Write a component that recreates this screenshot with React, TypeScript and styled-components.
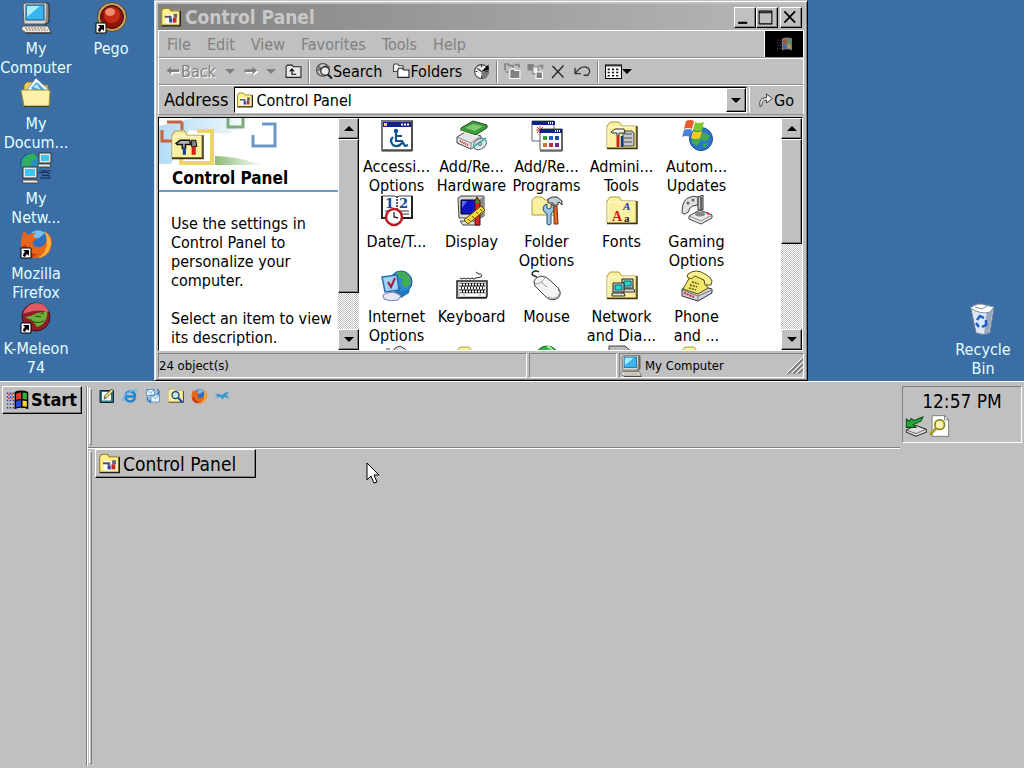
import React from 'react';
import styled, { createGlobalStyle, css } from 'styled-components';

const face = '#c0c0c0';
const shade = '#808080';
const dark = '#000000';
const light = '#ffffff';

const raised = css`
  border: 1px solid;
  border-color: ${light} ${dark} ${dark} ${light};
  box-shadow: inset -1px -1px 0 ${shade};
`;

const GlobalStyle = createGlobalStyle`
  *, *::before, *::after { box-sizing: border-box; }
  body { margin: 0; overflow: hidden; background: ${face}; }
  body, button, input {
    font-family: "DejaVu Sans Condensed", "DejaVu Sans", sans-serif;
    font-size: 16px;
    line-height: 19px;
  }
  button { margin: 0; padding: 0; border: 0; background: none; color: inherit; }
  p, h1, h2 { margin: 0; }
`;

const Screen = styled.div`
  display: flex;
  flex-direction: column;
  height: 100vh;
`;

const Desktop = styled.main`
  position: relative;
  flex: 1;
  min-height: 0;
  display: flex;
  justify-content: space-between;
  padding: 2px 4px 0 0;
  background: #3a6ea5;
  color: #e4ffff;
`;

const Shortcuts = styled.div`
  display: grid;
  grid-auto-flow: column;
  grid-template-rows: repeat(5, 75px);
  grid-auto-columns: 72px;
  column-gap: 3px;
`;

const BinArea = styled.div`
  padding-top: 301px;
  width: 74px;
`;

const Item = styled.button`
  display: flex;
  flex-direction: column;
  align-items: center;
  gap: 5px;
  width: 100%;
  height: 75px;
  white-space: nowrap;
`;

const ItemLabel = styled.span`
  display: block;
  text-align: center;
  white-space: pre;
`;

const Icon = styled.svg<{ $size?: number }>`
  display: block;
  flex: none;
  width: ${(p) => p.$size ?? 32}px;
  height: ${(p) => p.$size ?? 32}px;
  overflow: hidden;
`;

/* ---------- window frame ---------- */

const Window = styled.section`
  position: absolute;
  left: 154px;
  top: 0;
  bottom: 0;
  width: 654px;
  display: flex;
  flex-direction: column;
  padding: 2px 3px 1px;
  background: ${face};
  color: #000;
  border: 1px solid;
  border-color: ${face} ${dark} ${dark} #d8e4f4;
  box-shadow: inset 1px 1px 0 ${light}, inset -1px -1px 0 ${shade};
`;

const TitleBar = styled.header`
  display: flex;
  align-items: center;
  gap: 4px;
  height: 26px;
  margin-top: 1px;
  padding: 0 2px 0 3px;
  background: linear-gradient(90deg, #828282, #b8b8b8);
`;

const Title = styled.h1`
  flex: 1;
  font-size: 19px;
  line-height: 22px;
  font-weight: bold;
  color: #c8c8c8;
`;

const CaptionButtons = styled.div`
  display: flex;
`;

const CaptionButton = styled.button<{ $apart?: boolean }>`
  ${raised}
  width: 22px;
  height: 21px;
  margin-left: ${(p) => (p.$apart ? 2 : 0)}px;
  background: ${face};
`;

const Bar = styled.div<{ $height: number }>`
  display: flex;
  align-items: center;
  height: ${(p) => p.$height}px;
  border-top: 1px solid ${light};
  border-bottom: 1px solid #909090;
  border-left: 1px solid ${light};
  border-right: 1px solid ${light};
`;

const Menus = styled.nav`
  flex: 1;
  display: flex;
  gap: 16px;
  padding-left: 8px;
  color: ${shade};
`;

const Throbber = styled.div`
  display: flex;
  align-items: center;
  justify-content: center;
  width: 39px;
  height: 26px;
  background: #000;
  border-left: 1px solid ${light};
`;

const ToolRow = styled.div`
  display: flex;
  align-items: center;
  padding-left: 7px;
`;

const Tool = styled.button<{ $off?: boolean; $gap?: number }>`
  display: flex;
  align-items: center;
  margin-right: ${(p) => p.$gap ?? 6}px;
  color: ${(p) => (p.$off ? shade : '#000')};
  text-shadow: ${(p) => (p.$off ? '1px 1px 0 #fff' : 'none')};
`;

const ToolSeparator = styled.span`
  width: 2px;
  height: 22px;
  margin-right: 6px;
  border-left: 1px solid ${shade};
  border-right: 1px solid ${light};
`;

const Caret = styled.span<{ $off?: boolean }>`
  width: 0;
  height: 0;
  border: 5px solid transparent;
  border-top-color: ${(p) => (p.$off ? shade : '#000')};
  border-bottom: 0;
`;

const CaretUp = styled.span`
  display: inline-block;
  border: 5px solid transparent;
  border-bottom-color: #000;
  border-top: 0;
`;

const AddressLabel = styled.label`
  padding: 0 6px 0 5px;
  font-size: 18px;
  line-height: 22px;
`;

const AddressBox = styled.div`
  flex: 1;
  display: flex;
  align-items: center;
  height: 26px;
  padding: 0 0 0 2px;
  background: #fff;
  border: 1px solid;
  border-color: ${dark} ${light} ${light} ${dark};
  box-shadow: 0 -1px 0 ${shade};
`;

const AddressInput = styled.input`
  flex: 1;
  min-width: 0;
  padding: 0 0 0 3px;
  border: 0;
  background: transparent;
  outline: 0;
`;

const ArrowButton = styled.button`
  ${raised}
  display: flex;
  align-items: center;
  justify-content: center;
  flex: none;
  width: 100%;
  height: 21px;
  background: ${face};
`;

const DropButton = styled(ArrowButton)`
  width: 20px;
  height: 24px;
`;

const GoButton = styled.button`
  display: flex;
  align-items: center;
  width: 54px;
  height: 26px;
  margin-left: 2px;
  padding-left: 8px;
  border-left: 1px solid ${light};
`;

/* ---------- window content ---------- */

const Content = styled.div`
  flex: 1;
  min-height: 0;
  display: flex;
  margin: 2px 1px 0 0;
  background: #fff;
  border: 1px solid;
  border-color: ${dark} ${light} ${light} ${dark};
`;

const Pane = styled.div<{ $fixed?: boolean }>`
  display: flex;
  min-width: 0;
  flex: ${(p) => (p.$fixed ? '0 0 200px' : '1')};
`;

const Info = styled.aside`
  flex: 1;
  overflow: hidden;
`;

const Banner = styled.div`
  height: 74px;
  border-bottom: 2px solid #6f9bbd;
`;

const BannerArt = styled.svg`
  display: block;
  width: 100%;
  height: 51px;
`;

const BannerTitle = styled.h2`
  padding-left: 13px;
  font-size: 17px;
  line-height: 19px;
  font-weight: bold;
`;

const InfoText = styled.div`
  display: flex;
  flex-direction: column;
  gap: 19px;
  padding: 22px 2px 0 12px;
`;

const Items = styled.div`
  flex: 1;
  overflow: hidden;
  display: grid;
  grid-template-columns: repeat(5, 75px);
  grid-auto-rows: 75px;
  padding-top: 2px;
`;

const ScrollBar = styled.div`
  display: flex;
  flex-direction: column;
  width: 21px;
  background: repeating-conic-gradient(#fff 0 25%, ${face} 0 50%) 0 0 / 2px 2px;
`;

const Thumb = styled.div<{ $share: number }>`
  ${raised}
  flex: ${(p) => p.$share};
  background: ${face};
`;

const Track = styled.div<{ $share: number }>`
  flex: ${(p) => p.$share};
`;

const StatusBar = styled.footer`
  display: flex;
  gap: 2px;
  height: 28px;
  padding: 2px 0 1px;
  font-size: 13px;
  line-height: 16px;
`;

const StatusCell = styled.div<{ $width?: number }>`
  display: flex;
  align-items: center;
  gap: 3px;
  flex: ${(p) => (p.$width ? `0 0 ${p.$width}px` : '1')};
  border: 1px solid;
  border-color: ${shade} ${light} ${light} ${shade};
`;

const Grow = styled.span`
  flex: 1;
`;

/* ---------- taskbar ---------- */

const Taskbar = styled.footer`
  flex: 0 0 387px;
  display: flex;
  padding: 4px 2px 2px;
  background: ${face};
  border-top: 1px solid ${light};
`;

const StartArea = styled.div`
  flex: 0 0 85px;
  border-right: 1px solid ${shade};
`;

const StartButton = styled.button`
  ${raised}
  display: flex;
  align-items: center;
  gap: 2px;
  width: 80px;
  height: 28px;
  padding-left: 3px;
  font-size: 18px;
  line-height: 22px;
  font-weight: bold;
`;

const Bands = styled.div`
  flex: 1;
  display: flex;
  flex-direction: column;
  border-left: 1px solid ${light};
`;

const Band = styled.div<{ $height?: number }>`
  display: flex;
  align-items: flex-start;
  padding-left: 1px;
  flex: ${(p) => (p.$height ? `0 0 ${p.$height}px` : '1')};
  border-bottom: ${(p) => (p.$height ? `1px solid ${shade}` : '0')};
  border-top: ${(p) => (p.$height ? '0' : `1px solid ${light}`)};
`;

const Grip = styled.span`
  align-self: stretch;
  width: 3px;
  margin: 2px 3px 2px 0;
  border: 1px solid;
  border-color: ${light} ${shade} ${shade} ${light};
`;

const QuickLaunch = styled.div`
  display: flex;
  gap: 7px;
  padding: 2px 0 0 4px;
`;

const TaskButton = styled.button`
  ${raised}
  display: flex;
  align-items: center;
  gap: 3px;
  width: 161px;
  height: 29px;
  padding-left: 3px;
  font-size: 19px;
  line-height: 22px;
`;

const Tray = styled.div`
  display: flex;
  flex-direction: column;
  width: 120px;
  height: 57px;
  margin-left: 2px;
  padding: 3px 2px 0;
  border: 1px solid;
  border-color: ${shade} ${light} ${light} ${shade};
`;

const Clock = styled.time`
  text-align: center;
  font-size: 19px;
  line-height: 22px;
`;

const TrayIcons = styled.div`
  display: flex;
  gap: 1px;
  padding-top: 3px;
`;

const Pointer = styled.svg`
  position: absolute;
  left: 366px;
  top: 462px;
  width: 16px;
  height: 24px;
  pointer-events: none;
`;

/* ---------- drawings ---------- */

type Glyph = () => React.ReactElement;

const Arrow: Glyph = () => (
  <g>
    <path d="M1 21h10v10H1z" fill="#fff" stroke="#000" />
    <path d="M3 29q0-3 2-4l-2-2h6v6l-2-2q-1 1-2 3z" fill="#000" />
  </g>
);

const FolderShape: Glyph = () => (
  <g>
    <path d="M1 28V6l3-4h9l3 4h14v22z" fill="#fbf0a0" stroke="#b09a3c" />
    <path d="M2 27V7h27" fill="none" stroke="#fffbe0" />
    <path d="M1 28.500h30V6" fill="none" stroke="#3a3410" strokeWidth="1.500" />
  </g>
);

const Computer: Glyph = () => (
  <g>
    <path d="M3 3l2-2h22v19l-3 2H4z" fill="#d8d8d0" stroke="#555" />
    <path d="M27 1l2 1v18l-4 3" fill="#8a8a84" stroke="#222" />
    <rect x="6" y="3" width="18" height="15" fill="#38b4ee" stroke="#12508a" />
    <path d="M7 4h13L7 15z" fill="#a8ecff" />
    <path d="M3 24h25l3 7H6L1 27z" fill="#ece6dc" stroke="#5c5450" />
    <path d="M5 26h21M6 28h22" stroke="#8c7c78" strokeDasharray="2 1" />
    <path d="M6 31h25" stroke="#222" />
  </g>
);

const Documents: Glyph = () => (
  <g>
    <path d="M4 28V8l3-3h7l2 3h12v20z" fill="#e8cf60" stroke="#8a7420" />
    <path d="M6 14L16 1l15 14-8 8z" fill="#f4faff" stroke="#6e98b8" />
    <path d="M11 11l6-6 8 8-6 6z" fill="#4aa0da" />
    <path d="M13 10l4-3 4 6z" fill="#b8e8ff" />
    <path d="M1 13h27l2 1-1 15H4z" fill="#fbf2a8" stroke="#a08c38" />
    <path d="M4 29.500h25" stroke="#4a4010" />
  </g>
);

const Network: Glyph = () => (
  <g>
    <circle cx="11" cy="12" r="10.500" fill="#2a8fc0" stroke="#155a70" />
    <path d="M3 7q6-7 12-5l2 4-5 3-2 5-6 2q-3-4-1-9z" fill="#2fae62" />
    <path d="M19 1h12v10H19z" fill="#e4e4e4" stroke="#333" />
    <path d="M21 3h8v6h-8z" fill="#3cc4f0" />
    <path d="M18 12h12l1 3H18z" fill="#eee" stroke="#444" />
    <path d="M3 15h14v11H3z" fill="#e8e8e8" stroke="#333" />
    <path d="M5 17h10v7H5z" fill="#3cc4f0" />
    <path d="M2 28h15l2 3H3z" fill="#eee" stroke="#444" />
    <path d="M21 19l10 0M19 21l6-1 5 2M22 23l8 1M20 26h11" stroke="#10204c" fill="none" />
  </g>
);

const FoxShape: Glyph = () => (
  <g>
    <circle cx="17" cy="15" r="13" fill="#2e6fc0" />
    <path d="M12 5q7-4 13 1l-6 5-7 1z" fill="#7cc0f0" />
    <path d="M4 4l4 4q4-3 8-2-3 2-3 4l4 1-4 4q-1 4 4 5 6 1 9-5l1-7-3-4q8 3 8 12-1 14-15 15Q2 30 1 18q0-8 3-14z" fill="#e8661c" />
    <path d="M24 4q7 5 7 12-1 13-13 15 8-5 9-14 0-8-3-13z" fill="#fbb23a" />
    <path d="M2 19q1 9 10 12l5-4q-9 0-11-9z" fill="#c03c10" />
  </g>
);

const Firefox: Glyph = () => (
  <g>
    <FoxShape />
    <Arrow />
  </g>
);

const KMeleon: Glyph = () => (
  <g>
    <circle cx="16" cy="15" r="14" fill="#8f1c28" stroke="#3c1014" />
    <path d="M3 12Q6 2 16 1q10 0 13 9Q16 6 3 12z" fill="#e05a66" />
    <path d="M5 15q7-1 12-4 5 0 10-2 1 5-2 10-3 5-8 6-3-6-12-10z" fill="#6cb03c" />
    <path d="M10 17q5 6 14 2M15 14l6 1M21 12l3-1" fill="none" stroke="#1d4a14" />
    <Arrow />
  </g>
);

const Pego: Glyph = () => (
  <g>
    <circle cx="17" cy="15" r="14.500" fill="#c8a860" stroke="#5a4426" />
    <circle cx="17" cy="15" r="11.500" fill="#8c1408" stroke="#3c0c04" />
    <circle cx="17" cy="13" r="8" fill="#c42c18" />
    <ellipse cx="15" cy="10" rx="5" ry="4" fill="#f08c70" />
    <Arrow />
  </g>
);

const RecycleBin: Glyph = () => (
  <g>
    <path d="M4 6l23-1-4 25q-7 3-14 0z" fill="#dce8f4" stroke="#67788c" />
    <path d="M20 7l6-1-4 24-5 1z" fill="#98a8bc" />
    <path d="M3 5q8-6 15-3l9 2-4 5q-9 3-20-4z" fill="#fff" stroke="#8290a0" />
    <path d="M8 4l7 2 5-3" fill="none" stroke="#8290a0" />
    <path d="M10 17l3-4 4 2M19 17l0 5-4 2M12 24l-3-4" fill="none" stroke="#1c5ad0" strokeWidth="2.500" />
  </g>
);

const Accessibility: Glyph = () => (
  <g>
    <path d="M1 1h30v29H1z" fill="#fff" stroke="#777" strokeWidth="2" />
    <path d="M2 2h28v5H2z" fill="#10208c" />
    <path d="M3 3h3v3H3z" fill="#ffd83c" />
    <path d="M20 4.500h9" stroke="#fff" strokeDasharray="2 1" strokeWidth="2" />
    <circle cx="15" cy="11" r="2.200" fill="#10508c" />
    <path d="M15 13v8h6l3 5 3-1M15 16h6M12 17q-4 4 0 8 5 3 9-2" fill="none" stroke="#10508c" strokeWidth="2.200" />
    <path d="M31 1v30H1" fill="none" stroke="#222" />
  </g>
);

const Hardware: Glyph = () => (
  <g>
    <path d="M1 17l10-6 14 5-1 8-9 5-14-6z" fill="#e4e4e4" stroke="#444" />
    <path d="M1 17l14 6 10-7M15 23v6" fill="none" stroke="#888" />
    <path d="M4 21l8 4" stroke="#d02020" strokeDasharray="1 1" strokeWidth="2" />
    <path d="M5 8l12-7 14 4v3l-11 7L5 11z" fill="#3c9c3c" stroke="#184c18" />
    <path d="M9 8l8-4 10 2-8 5z" fill="#80c870" />
    <path d="M5 11l15 5 11-7" stroke="#fff" fill="none" />
    <ellipse cx="24" cy="24" rx="7" ry="5" transform="rotate(-35 24 24)" fill="#d8ecec" stroke="#667" />
    <path d="M17 27l13-9" stroke="#40b8b0" strokeWidth="2" />
    <circle cx="24" cy="24" r="1.500" fill="#fff" stroke="#555" />
  </g>
);

const Programs: Glyph = () => (
  <g>
    <path d="M1 1h22v20H1z" fill="#fff" stroke="#666" />
    <path d="M1 1h23v4H1z" fill="#10208c" />
    <path d="M17 3h6" stroke="#fff" strokeDasharray="1 1" strokeWidth="2" />
    <path d="M9 6v8M5 10h8M6 7l6 6M12 7l-6 6" stroke="#d83020" />
    <path d="M9 9h22v21H9z" fill="#fff" stroke="#555" />
    <path d="M9 9h22v4H9z" fill="#10208c" />
    <path d="M24 11h6" stroke="#fff" strokeDasharray="1 1" strokeWidth="2" />
    <path d="M12 16h4v4h-4z" fill="#3c9c3c" />
    <path d="M18 16h4v4h-4z" fill="#2a60c8" />
    <path d="M24 16h4v4h-4z" fill="#204898" />
    <path d="M12 23h4v4h-4z" fill="#d07030" />
    <path d="M18 23h4v4h-4z" fill="#c02848" />
    <path d="M24 23h4v4h-4z" fill="#702890" />
    <path d="M31 9v22H9" stroke="#222" fill="none" />
  </g>
);

const AdminTools: Glyph = () => (
  <g>
    <FolderShape />
    <path d="M17 11h9l2 2v13H17z" fill="#c8c8c8" stroke="#444" />
    <path d="M18 14h8M18 18h8M18 22h8" stroke="#777" strokeWidth="1.500" />
    <path d="M5 12l4-3h9l1 4h-6v3h-2v-3H6z" fill="#eee" stroke="#333" />
    <path d="M12 16v11" stroke="#c03018" strokeWidth="3" />
    <path d="M16 16v11" stroke="#103c80" strokeWidth="2.500" />
  </g>
);

const Updates: Glyph = () => (
  <g>
    <circle cx="20" cy="19" r="11.500" fill="#2878c8" stroke="#184888" />
    <path d="M17 12q9 0 12 5l-4 4-5-1-4 6-5-3q-1-9 6-11z" fill="#44a850" />
    <path d="M22 24l5-1-4 5z" fill="#44a850" />
    <path d="M5 1q4-2 8 0l-2 8q-4-2-8 0z" fill="#e85a28" />
    <path d="M14 2q4 2 9 0l-2 8q-4 2-9 0z" fill="#7cc830" />
    <path d="M3 10q4-2 8 0l-2 7q-4-2-8 0z" fill="#4a80e0" />
    <path d="M12 11q4 2 9 0l-2 7q-4 2-9 0z" fill="#f8c828" />
  </g>
);

const DateTime: Glyph = () => (
  <g>
    <path d="M1 1h13l2 2 2-2h13v22l-13 1-2 2-2-2-13-1z" fill="#fff" stroke="#444" />
    <path d="M31 1v22H1V1" fill="none" stroke="#222" strokeWidth="2" />
    <path d="M16 1v20" stroke="#555" strokeDasharray="2 1" strokeWidth="2" />
    <path d="M4 16h10M19 16h9M20 19h8" stroke="#333" />
    <text x="4" y="13" fontFamily="DejaVu Serif, serif" fontWeight="bold" fontSize="13" fill="#104a98">1</text>
    <text x="18" y="13" fontFamily="DejaVu Serif, serif" fontWeight="bold" fontSize="13" fill="#104a98">2</text>
    <circle cx="13" cy="22" r="8" fill="#fff" stroke="#b81c24" strokeWidth="2.500" />
    <path d="M13 17v5l4 1" fill="none" stroke="#222" strokeWidth="1.300" />
  </g>
);

const Display: Glyph = () => (
  <g>
    <path d="M2 3l3-2h23v20l-4 2H3z" fill="#d8d8d0" stroke="#444" />
    <path d="M24 4l4-3v20l-4 2z" fill="#888" />
    <path d="M5 5h17v14H5z" fill="#0c14c4" stroke="#000" />
    <path d="M6 6h5L6 13z" fill="#5c6cf8" />
    <path d="M4 26h18l2 4H7z" fill="#e0e0e0" stroke="#444" />
    <path d="M19 6l2-4 3 4v24h-5z" fill="#d82420" stroke="#5a0c0c" />
    <path d="M19 8l2-5 3 5z" fill="#20a030" />
    <path d="M8 25L25 11l4 4-17 14z" fill="#f4dc38" stroke="#5c4c08" />
    <path d="M12 24l2 2M16 21l2 2M20 17l2 2M24 14l2 2" stroke="#5c4c08" />
  </g>
);

const FolderOptions: Glyph = () => (
  <g>
    <path d="M1 20V5l3-3h7l3 3h9v15z" fill="#fbf0a0" stroke="#b09a3c" />
    <path d="M12 13q1-4 4-4v4l2 1 2-1V9q4 2 3 6l-3 4v10q-2 2-4 0V19q-4-2-4-6z" fill="#9cc4e4" stroke="#244c74" />
    <path d="M17 4q4-3 9-2l5 4v4q-2-3-4-3v3h-5V8h-5z" fill="#c4ccd4" stroke="#333" />
    <path d="M23 11h3l1 18h-4z" fill="#e8682c" stroke="#7c2c08" />
  </g>
);

const Fonts: Glyph = () => (
  <g>
    <FolderShape />
    <text x="6" y="26" fontFamily="Liberation Serif, serif" fontWeight="bold" fontSize="14" fill="#d01c1c">A</text>
    <text x="17" y="15" fontFamily="Liberation Serif, serif" fontWeight="bold" fontStyle="italic" fontSize="11" fill="#1c2cb8">A</text>
    <text x="18" y="27" fontFamily="Liberation Serif, serif" fontWeight="bold" fontSize="11" fill="#222">a</text>
  </g>
);

const Gaming: Glyph = () => (
  <g>
    <path d="M1 17q0-11 6-14 5-3 10-1v8q-6 0-8 3-1 5-5 6-3 0-3-2z" fill="#e0e0e0" stroke="#444" />
    <circle cx="7" cy="8" r="1.500" fill="#666" />
    <circle cx="12" cy="5" r="1.500" fill="#666" />
    <path d="M17 2l5-2v15h-5z" fill="#ccc" stroke="#333" />
    <path d="M20 2v13" stroke="#666" strokeWidth="2" />
    <path d="M8 21l11-6 12 5v3l-11 6-12-5z" fill="#eaeaea" stroke="#444" />
    <path d="M8 21l12 5 11-6" fill="none" stroke="#888" />
    <ellipse cx="19" cy="19" rx="5" ry="2.500" fill="#888" />
    <path d="M26 18l2 1" stroke="#e02020" strokeWidth="2" />
  </g>
);

const InternetOptions: Glyph = () => (
  <g>
    <circle cx="20" cy="12" r="11" fill="#2c88d0" stroke="#1c5a90" />
    <path d="M16 2q8-2 12 4l2 7-5 5-5-4 2-5-5-2z" fill="#44ac50" />
    <path d="M14 20l10 2q5-3 6-8l-2 9-8 5-7-4z" fill="#2474b8" />
    <path d="M1 7l15-2 2 15-14 2z" fill="#9cd4f8" stroke="#2c6aac" strokeWidth="1.500" />
    <path d="M7 12l3 5 4-9" fill="none" stroke="#a01c38" strokeWidth="2" />
    <path d="M2 25q10-6 18 1l-3 4q-8 2-14-1z" fill="#e4e6f4" stroke="#7880ac" />
  </g>
);

const Keyboard: Glyph = () => (
  <g>
    <path d="M4 8l2 1 2-1 2 1 2-1 2 1 2-1 2 1 2-1 5-1q2-3-2-3l-3-2" fill="none" stroke="#222" />
    <path d="M1 11h30v15l-1 2H1z" fill="#d0d0d0" stroke="#222" strokeWidth="1.500" />
    <path d="M4 14.500h25M3 18h26M4 21.500h25" stroke="#111" strokeWidth="3" />
    <path d="M4 14.500h25M3 18h26M4 21.500h25" stroke="#fff" strokeWidth="2" strokeDasharray="2 1" />
    <path d="M4 25h3M9 25h14M25 25h4" stroke="#fff" strokeWidth="2" />
    <path d="M3 27.500h27" stroke="#222" />
  </g>
);

const Mouse: Glyph = () => (
  <g>
    <path d="M6 7Q-1 5 2 2q3-2 6 0" fill="none" stroke="#222" strokeWidth="1.500" />
    <path d="M3 12q0-4 7-6 5 0 10 5l8 8q3 5-1 9-6 4-12-1L4 16z" fill="#f4f4f4" stroke="#444" />
    <path d="M4 14q7 0 11-8M10 12l6 5M27 19q3 4 0 8-5 3-10 0" fill="none" stroke="#999" />
  </g>
);

const DialUp: Glyph = () => (
  <g>
    <FolderShape />
    <path d="M16 9h11v9H16z" fill="#ccc" stroke="#222" />
    <path d="M18 11h7v5h-7z" fill="#28d8d0" stroke="#066" />
    <path d="M15 19h13l1 3H15z" fill="#ddd" stroke="#333" />
    <path d="M7 13h11v9H7z" fill="#ccc" stroke="#222" />
    <path d="M9 15h7v5H9z" fill="#28d8d0" stroke="#066" />
    <path d="M6 23h12l1 3H6z" fill="#ddd" stroke="#333" />
  </g>
);

const Phone: Glyph = () => (
  <g>
    <path d="M1 19l15-4 15 4v4l-14 8L1 26z" fill="#d0d0d8" stroke="#333" />
    <path d="M1 20l16 6 14-6M17 26v5" fill="none" stroke="#777" />
    <path d="M3 23l10 4" stroke="#d02838" strokeDasharray="2 1" strokeWidth="2" />
    <path d="M10 5l11 2 6 11-10 6L2 19z" fill="#f0e66c" stroke="#5c5410" />
    <path d="M7 4q8-6 17 0 6 3 7 7l-1 4-6 0-1-5-9-4-4 3-4-2z" fill="#f8f090" stroke="#5c5410" />
    <path d="M11 12l7 2M9 15l7 2M8 18l7 2" stroke="#5c5410" strokeWidth="1.500" strokeDasharray="2 1" />
  </g>
);

const Printer: Glyph = () => (
  <g>
    <path d="M5 4h4M14 3l5-2 5 3 2 4H12z" fill="#ddd" stroke="#444" />
    <path d="M4 10h24v14H4z" fill="#ddd" stroke="#444" />
  </g>
);

const Globe: Glyph = () => (
  <g>
    <circle cx="16" cy="13" r="12" fill="#2fb048" stroke="#1c6c2c" />
    <path d="M16 1q6 3 8 8" stroke="#a8f0a0" fill="none" strokeWidth="2" />
  </g>
);

const Scanner: Glyph = () => (
  <g>
    <path d="M3 1h16l6 5v18H3z" fill="#bbb" stroke="#444" />
  </g>
);

const PanelFolder: Glyph = () => (
  <g>
    <FolderShape />
    <path d="M5 14l4-3h9l1 4h-5v4h-3v-4H6z" fill="#b0b4bc" stroke="#111" strokeWidth="1.500" />
    <path d="M13 18v7" stroke="#1c3c94" strokeWidth="3" />
    <path d="M20 11h4l1 6h-5z" fill="#888" stroke="#111" />
    <path d="M22 17v8" stroke="#d02018" strokeWidth="4" />
  </g>
);

const SmallPanelFolder: Glyph = () => (
  <g>
    <path d="M1 29V6l3-4h9l3 4h14v23z" fill="#fbf08c" stroke="#a08c30" strokeWidth="2" />
    <path d="M1 30h30V6" fill="none" stroke="#222" strokeWidth="2" />
    <path d="M7 12h20v14H7z" fill="#fff" />
    <path d="M6 14h11v5h-4v-2H6z" fill="#556" />
    <path d="M20 11h6v6h-6z" fill="#667" />
    <path d="M13 19h5v6h-5z" fill="#2c4cb0" />
    <path d="M19 17h6v8h-6z" fill="#c82c20" />
  </g>
);

const Flag: Glyph = () => (
  <g>
    <path d="M1 6h10M1 11h10M1 16h10M1 21h10M1 26h10" stroke="#2838b0" strokeWidth="2" strokeDasharray="2 2" />
    <path d="M3 8h8M3 13h8" stroke="#c82c28" strokeWidth="2" strokeDasharray="2 2" />
    <path d="M12 4q8-4 19 0v24q-10-4-19 0z" fill="#000" />
    <path d="M14 7q3-2 7-2v9q-4 0-7 1z" fill="#e83828" />
    <path d="M23 5q4 0 6 1v9q-3-1-6-1z" fill="#30b038" />
    <path d="M14 17q3-2 7-1v9q-4-1-7 1z" fill="#2848d8" />
    <path d="M23 16q4 0 6 1v8q-3-1-6-1z" fill="#f4d428" />
  </g>
);

const DimFlag: Glyph = () => (
  <g>
    <path d="M3 8h8M2 13h9M3 18h8M2 23h9" stroke="#6c4c68" strokeWidth="2" strokeDasharray="2 2" />
    <path d="M11 5q9-4 19-1v23q-9-4-19 0z" fill="#7c8078" />
    <path d="M13 8q3-2 7-2v8q-4 0-7 1z" fill="#a05440" />
    <path d="M22 6q4 0 6 1v8q-3-1-6-1z" fill="#5c9458" />
    <path d="M13 17q3-2 7-1v8q-4-1-7 1z" fill="#4468b0" />
    <path d="M22 16q4 0 6 1v7q-3-1-6-1z" fill="#b0a048" />
  </g>
);

const Pencil: Glyph = () => (
  <g>
    <path d="M2 5h27v24H2z" fill="#2c7480" stroke="#123" strokeWidth="2" />
    <path d="M6 8h18v17H6z" fill="#f8fcf4" />
    <path d="M10 22l2-7L25 2l4 4-13 13z" fill="#f0e478" stroke="#222" strokeWidth="1.500" />
  </g>
);

const Explorer: Glyph = () => (
  <g fill="none">
    <path d="M26 20q-3 7-10 7-9-1-9-10 1-10 10-10 9 1 9 10H9" stroke="#2484d0" strokeWidth="5" />
    <path d="M3 27Q-1 20 12 10 28 0 30 6" stroke="#68b8f0" strokeWidth="3" />
  </g>
);

const Mail: Glyph = () => (
  <g>
    <path d="M3 3h16v12H3zM12 14h17v14H12z" fill="#eaf4ff" stroke="#3c84c8" strokeWidth="1.500" />
    <path d="M3 3l8 7 8-7M12 14l9 7 8-7" fill="none" stroke="#3c84c8" strokeWidth="1.500" />
    <path d="M24 2q6 3 4 10l-4-2M5 18q-3 9 6 11l-1-5" fill="#5ab0f0" stroke="#2068b4" strokeWidth="2" />
  </g>
);

const SearchFolder: Glyph = () => (
  <g>
    <FolderShape />
    <circle cx="15" cy="14" r="7" fill="#c0ecf8" stroke="#1c3c70" strokeWidth="2.500" />
    <path d="M20 19l9 10" stroke="#1c48b8" strokeWidth="4" />
  </g>
);

const Bird: Glyph = () => (
  <path d="M1 14l8-3 7 3 6-5 8-1-5 6 6 8-10-4-4 5-4-5-9 1 3-3z" fill="#3c9cd0" />
);

const Eject: Glyph = () => (
  <g>
    <path d="M2 22l14-7 15 6v4l-15 6-14-6z" fill="#ddd" stroke="#333" strokeWidth="1.500" />
    <path d="M2 22l14 5 14-6" fill="none" stroke="#444" />
    <path d="M2 6v12h14l-4-4 11-5 3-6-13 5-4-3-3 4z" fill="#28a83c" stroke="#0c4c14" strokeWidth="1.500" />
  </g>
);

const SearchPage: Glyph = () => (
  <g>
    <path d="M6 1h18l6 6v24H6z" fill="#fff" stroke="#555" />
    <path d="M24 1v6h6" fill="none" stroke="#555" />
    <circle cx="17" cy="14" r="7" fill="#f8f4b0" stroke="#8c8418" strokeWidth="2.500" />
    <path d="M12 19L3 29" stroke="#a89c20" strokeWidth="4" />
  </g>
);

const BackArrow: Glyph = () => (
  <g>
    <path d="M4 17l10-8v5h16v6H14v5z" fill="#fff" />
    <path d="M1 14l10-8v5h17v6H11v5z" fill="#808080" />
  </g>
);

const ForwardArrow: Glyph = () => (
  <g>
    <path d="M31 17l-10-8v5H4v6h17v5z" fill="#fff" />
    <path d="M28 14L18 6v5H1v6h17v5z" fill="#808080" />
  </g>
);

const UpFolder: Glyph = () => (
  <g>
    <path d="M2 27V7l3-3h8l3 3h14v20z" fill="#e8e8e8" stroke="#222" strokeWidth="2" />
    <path d="M21 21h-8v-8M9 16l4-5 4 5" fill="none" stroke="#000" strokeWidth="2" />
  </g>
);

const SearchTool: Glyph = () => (
  <g>
    <circle cx="13" cy="13" r="12" fill="#c4c4c4" stroke="#444" strokeWidth="2" />
    <path d="M4 6q6 2 5 7-6 1-7-1M18 3q1 4 8 4" fill="#888" stroke="#555" strokeWidth="2" />
    <circle cx="17" cy="15" r="8" fill="#eee" stroke="#333" strokeWidth="2.500" />
    <path d="M22 21l8 8" stroke="#222" strokeWidth="4" />
  </g>
);

const FoldersTool: Glyph = () => (
  <g>
    <path d="M1 16V4l2-2h6l2 3h8v11z" fill="#f4f4f4" stroke="#444" strokeWidth="2" />
    <path d="M9 27V13l2-3h6l3 3h10v14z" fill="#fff" stroke="#222" strokeWidth="2" />
  </g>
);

const HistoryTool: Glyph = () => (
  <g>
    <circle cx="16" cy="16" r="13" fill="#e8e8e8" stroke="#444" strokeWidth="2" />
    <path d="M16 16L27 7q4 8 1 15-5 7-12 6z" fill="#777" />
    <path d="M16 16L29 3l1 9z" fill="#000" />
    <path d="M16 16L8 10M5 16h3M16 4v4M16 25v3M24 16h4" stroke="#222" strokeWidth="2" />
    <path d="M5 18q2 9 10 10l-1-9z" fill="#fff" />
  </g>
);

const MoveTool: Glyph = () => (
  <g>
    <path d="M2 14V2h6l2 3h7v4" fill="none" stroke="#808080" strokeWidth="3" />
    <path d="M3 17h5M20 3h8v6" fill="none" stroke="#808080" strokeWidth="3" />
    <path d="M11 29V14l3-3h5l2 3h9v15z" fill="#808080" stroke="#fff" strokeWidth="2" />
  </g>
);

const CopyTool: Glyph = () => (
  <g>
    <path d="M1 2h12v12H1z" fill="#808080" />
    <path d="M11 7h10v13H11z" fill="#eee" stroke="#808080" strokeWidth="2" />
    <path d="M17 29V17h12v12z" fill="#808080" stroke="#fff" strokeWidth="2" />
    <path d="M23 5h6v6" fill="none" stroke="#808080" strokeWidth="3" />
  </g>
);

const DeleteTool: Glyph = () => (
  <path d="M5 4l22 23M27 3L4 28" stroke="#222" strokeWidth="2.500" fill="none" />
);

const UndoTool: Glyph = () => (
  <path d="M2 9v11h11M3 19Q14 3 26 9q7 6 0 14h-8" stroke="#333" strokeWidth="2.500" fill="none" />
);

const ViewsTool: Glyph = () => (
  <g>
    <path d="M1 4h30v25H1z" fill="#fff" stroke="#000" strokeWidth="2" />
    <path d="M1 5h30" stroke="#333" strokeWidth="3" />
    <path d="M5 12h23M5 18h23M5 24h23" stroke="#111" strokeWidth="3" strokeDasharray="4 4" />
  </g>
);

const GoTool: Glyph = () => (
  <path d="M4 29Q0 12 17 11V4l12 9-12 9v-6Q7 16 8 27z" fill="#eee" stroke="#444" strokeWidth="2" />
);

const MinimizeMark: Glyph = () => <path d="M6 26h17" stroke="#000" strokeWidth="4" />;
const MaximizeMark: Glyph = () => (
  <path d="M4 4h24v24H4zM4 7h24" fill="none" stroke="#000" strokeWidth="2" />
);
const CloseMark: Glyph = () => <path d="M6 6l19 20M25 6L6 26" stroke="#000" strokeWidth="3" />;

const Pic = ({ of: Shape, size }: { of: Glyph; size?: number }) => (
  <Icon viewBox="0 0 32 32" $size={size} aria-hidden="true">
    <Shape />
  </Icon>
);

/* ---------- data ---------- */

type Entry = [Glyph, string];

const shortcuts: Entry[] = [
  [Computer, 'My\nComputer'],
  [Documents, 'My\nDocum...'],
  [Network, 'My\nNetw...'],
  [Firefox, 'Mozilla\nFirefox'],
  [KMeleon, 'K-Meleon\n74'],
  [Pego, 'Pego'],
];

const applets: Entry[] = [
  [Accessibility, 'Accessi...\nOptions'],
  [Hardware, 'Add/Re...\nHardware'],
  [Programs, 'Add/Re...\nPrograms'],
  [AdminTools, 'Admini...\nTools'],
  [Updates, 'Autom...\nUpdates'],
  [DateTime, 'Date/T...'],
  [Display, 'Display'],
  [FolderOptions, 'Folder\nOptions'],
  [Fonts, 'Fonts'],
  [Gaming, 'Gaming\nOptions'],
  [InternetOptions, 'Internet\nOptions'],
  [Keyboard, 'Keyboard'],
  [Mouse, 'Mouse'],
  [DialUp, 'Network\nand Dia...'],
  [Phone, 'Phone\nand ...'],
  [Printer, ''],
  [FolderShape, ''],
  [Globe, ''],
  [Scanner, ''],
  [FolderShape, ''],
];

const menus = ['File', 'Edit', 'View', 'Favorites', 'Tools', 'Help'];
const quick: Entry[] = [
  [Pencil, 'Show Desktop'],
  [Explorer, 'Internet Explorer'],
  [Mail, 'Outlook Express'],
  [SearchFolder, 'Search'],
  [FoxShape, 'Firefox'],
  [Bird, 'Messenger'],
];

const Entries = ({ list }: { list: Entry[] }) => (
  <>
    {list.map(([shape, label], i) => (
      <Item key={i} type="button">
        <Pic of={shape} />
        <ItemLabel>{label}</ItemLabel>
      </Item>
    ))}
  </>
);

const Scroll = ({ share }: { share: number }) => (
  <ScrollBar>
    <ArrowButton type="button" aria-label="Scroll up">
      <CaretUp />
    </ArrowButton>
    <Thumb $share={share} />
    <Track $share={100 - share} />
    <ArrowButton type="button" aria-label="Scroll down">
      <Caret />
    </ArrowButton>
  </ScrollBar>
);

export default function App() {
  return (
    <Screen>
      <GlobalStyle />
      <Desktop>
        <Shortcuts>
          <Entries list={shortcuts} />
        </Shortcuts>
        <BinArea>
          <Entries list={[[RecycleBin, 'Recycle\nBin']]} />
        </BinArea>

        <Window>
          <TitleBar>
            <Pic of={SmallPanelFolder} size={20} />
            <Title>Control Panel</Title>
            <CaptionButtons>
              <CaptionButton type="button" aria-label="Minimize">
                <Pic of={MinimizeMark} size={17} />
              </CaptionButton>
              <CaptionButton type="button" aria-label="Maximize">
                <Pic of={MaximizeMark} size={17} />
              </CaptionButton>
              <CaptionButton type="button" aria-label="Close" $apart>
                <Pic of={CloseMark} size={18} />
              </CaptionButton>
            </CaptionButtons>
          </TitleBar>

          <Bar $height={28}>
            <Menus>
              {menus.map((m) => (
                <button key={m} type="button">{m}</button>
              ))}
            </Menus>
            <Throbber>
              <Pic of={DimFlag} size={17} />
            </Throbber>
          </Bar>

          <Bar $height={27}>
            <ToolRow>
              <Tool type="button" $off $gap={9}>
                <Pic of={BackArrow} size={15} />
                Back
              </Tool>
              <Tool type="button" $off $gap={9} aria-label="Back history"><Caret $off /></Tool>
              <Tool type="button" $off $gap={7} aria-label="Forward"><Pic of={ForwardArrow} size={15} /></Tool>
              <Tool type="button" $off $gap={9} aria-label="Forward history"><Caret $off /></Tool>
              <Tool type="button" aria-label="Up"><Pic of={UpFolder} size={17} /></Tool>
              <ToolSeparator />
              <Tool type="button" $gap={11}>
                <Pic of={SearchTool} size={17} />
                Search
              </Tool>
              <Tool type="button" $gap={11}>
                <Pic of={FoldersTool} size={17} />
                Folders
              </Tool>
              <Tool type="button" aria-label="History"><Pic of={HistoryTool} size={17} /></Tool>
              <ToolSeparator />
              <Tool type="button" aria-label="Move To"><Pic of={MoveTool} size={17} /></Tool>
              <Tool type="button" aria-label="Copy To"><Pic of={CopyTool} size={17} /></Tool>
              <Tool type="button" $gap={8} aria-label="Delete"><Pic of={DeleteTool} size={16} /></Tool>
              <Tool type="button" aria-label="Undo"><Pic of={UndoTool} size={17} /></Tool>
              <ToolSeparator />
              <Tool type="button" aria-label="Views">
                <Pic of={ViewsTool} size={17} />
                <Caret />
              </Tool>
            </ToolRow>
          </Bar>

          <Bar $height={30}>
            <AddressLabel htmlFor="address">Address</AddressLabel>
            <AddressBox>
              <Pic of={SmallPanelFolder} size={16} />
              <AddressInput id="address" defaultValue="Control Panel" />
              <DropButton type="button" aria-label="Show addresses">
                <Caret />
              </DropButton>
            </AddressBox>
            <GoButton type="button">
              <Pic of={GoTool} size={16} />
              Go
            </GoButton>
          </Bar>

          <Content>
            <Pane $fixed>
              <Info>
                <Banner>
                  <BannerArt viewBox="0 0 180 51" preserveAspectRatio="xMinYMin slice" aria-hidden="true">
                    <defs>
                      <linearGradient id="sky" x1="0" x2="1">
                        <stop offset="0" stopColor="#b4dcf4" />
                        <stop offset="0.6" stopColor="#dceefa" />
                        <stop offset="1" stopColor="#ffffff" />
                      </linearGradient>
                      <linearGradient id="grass" x1="0" x2="1">
                        <stop offset="0" stopColor="#8cbc74" />
                        <stop offset="1" stopColor="#ffffff" />
                      </linearGradient>
                    </defs>
                    <path d="M0 8L35 0h60L70 16 30 12 12 46H0z" fill="url(#sky)" />
                    <path d="M56 38q20 0 48 9H56z" fill="url(#grass)" />
                    <path d="M8 4h15M3 12v11h12M23 4v8" fill="none" stroke="#c4643c" strokeWidth="3" />
                    <path d="M69 0v9h15V0" fill="none" stroke="#7cac78" strokeWidth="3" />
                    <path d="M103 6h13v22H94V17" fill="none" stroke="#6c98c8" strokeWidth="3" />
                    <path d="M38 13h15v32H22V40" fill="none" stroke="#ecd468" strokeWidth="4" />
                    <svg x="12" y="11" width="33" height="33" viewBox="0 0 32 32">
                      <PanelFolder />
                    </svg>
                  </BannerArt>
                  <BannerTitle>Control Panel</BannerTitle>
                </Banner>
                <InfoText>
                  <p>Use the settings in Control Panel to personalize your computer.</p>
                  <p>Select an item to view its description.</p>
                </InfoText>
              </Info>
              <Scroll share={81} />
            </Pane>
            <Pane>
              <Items>
                <Entries list={applets} />
              </Items>
              <Scroll share={55} />
            </Pane>
          </Content>

          <StatusBar>
            <StatusCell>24 object(s)</StatusCell>
            <StatusCell $width={88} />
            <StatusCell $width={185}>
              <Pic of={Computer} size={22} />
              My Computer
              <Grow />
              <Icon viewBox="0 0 16 16" $size={16} aria-hidden="true">
                <path d="M1 16L16 1M6 16L16 6M11 16l5-5" stroke="#808080" strokeWidth="2" />
                <path d="M0 15L15 0M5 15L16 4M10 15l6-6" stroke="#fff" />
              </Icon>
            </StatusCell>
          </StatusBar>
        </Window>
      </Desktop>

      <Taskbar>
        <StartArea>
          <StartButton type="button">
            <Pic of={Flag} size={23} />
            Start
          </StartButton>
        </StartArea>
        <Bands>
          <Band $height={62}>
            <Grip />
            <QuickLaunch>
              {quick.map(([shape, name]) => (
                <button key={name} type="button" aria-label={name}>
                  <Pic of={shape} size={16} />
                </button>
              ))}
            </QuickLaunch>
          </Band>
          <Band>
            <Grip />
            <TaskButton type="button">
              <Pic of={SmallPanelFolder} size={21} />
              Control Panel
            </TaskButton>
          </Band>
        </Bands>
        <Tray>
          <Clock>12:57 PM</Clock>
          <TrayIcons>
            <Pic of={Eject} size={22} />
            <Pic of={SearchPage} size={22} />
          </TrayIcons>
        </Tray>
      </Taskbar>

      <Pointer viewBox="0 0 16 24" aria-hidden="true">
        <path d="M1 1v17l4-4 3 7 3-1-3-7h5z" fill="#fff" stroke="#000" />
      </Pointer>
    </Screen>
  );
}
